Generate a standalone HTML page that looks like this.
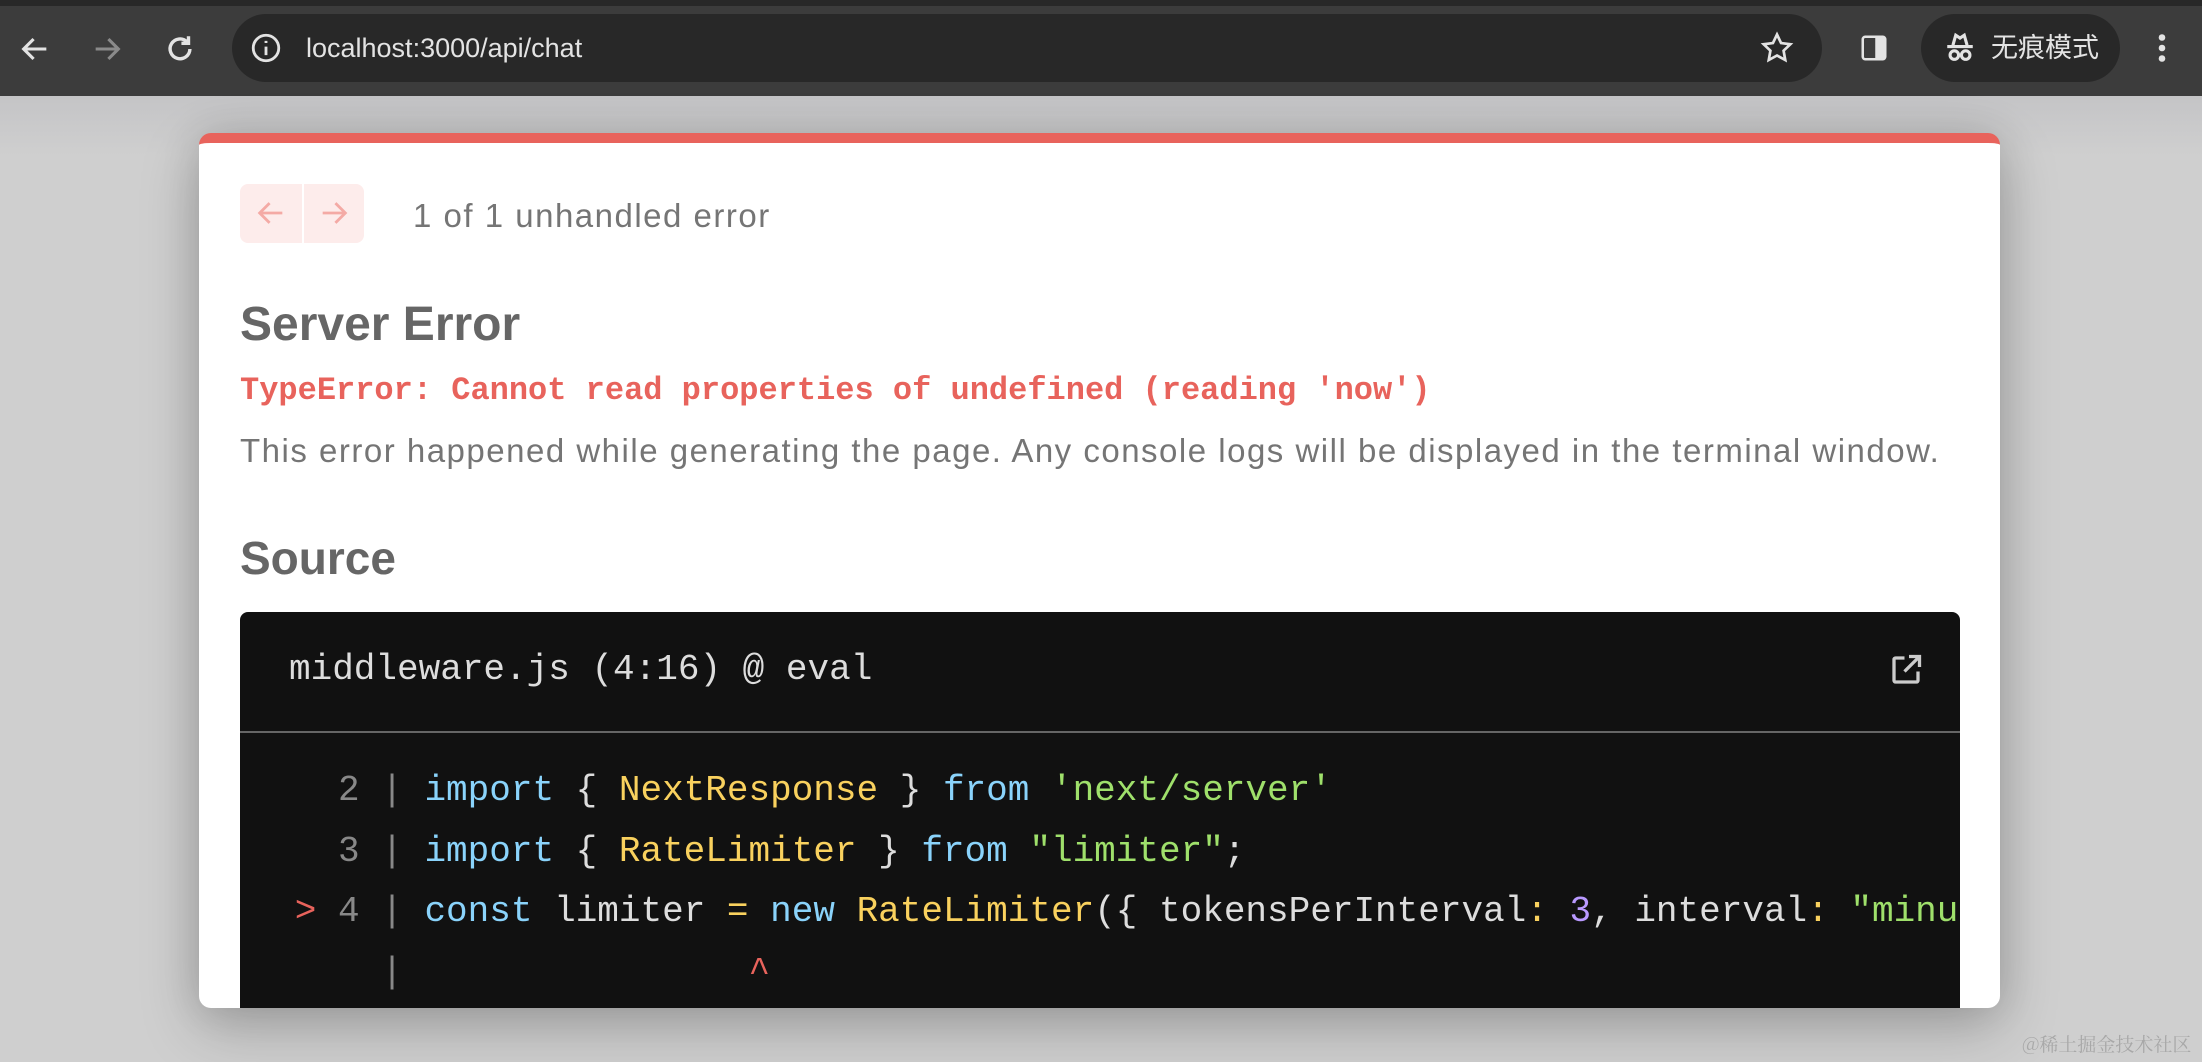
<!DOCTYPE html>
<html><head><meta charset="utf-8">
<style>
*{margin:0;padding:0;box-sizing:border-box}
html,body{width:2202px;height:1062px;overflow:hidden;background:#cfcfcf;font-family:"Liberation Sans","Noto Sans CJK SC",sans-serif}
.abs{position:absolute}
.bar{left:0;top:0;width:2202px;height:96px;background:#3c3c3c}
.bar .strip{left:0;top:0;width:2202px;height:6px;background:#282828}
.url{left:232px;top:14px;width:1590px;height:68px;border-radius:34px;background:#282828}
.urltxt{left:306px;top:30px;font-size:27px;color:#e3e3e3;line-height:36px}
.pill{left:1921px;top:14px;width:199px;height:68px;border-radius:34px;background:#282828}
.bg{left:0;top:96px;width:2202px;height:966px;background:linear-gradient(#c4c4c6,#cfcfcf 60px)}
.dlg{left:199px;top:133px;width:1801px;height:875px;background:#fff;border-radius:12px;overflow:hidden;box-shadow:0 20px 60px rgba(0,0,0,.22),0 0 40px rgba(0,0,0,.12);border-top:10px solid #e8635c}
.mono{font-family:"Liberation Mono","DejaVu Sans Mono",monospace}
.code{left:41px;top:469px;width:1720px;height:420px;background:#111;border-radius:8px 8px 0 0;overflow:hidden}
.ln{position:absolute;left:-10px;font-family:"Liberation Mono","DejaVu Sans Mono",monospace;font-size:36px;line-height:60px;white-space:pre;color:#ddd}
.k{color:#8ad3fb}.y{color:#f9d15e}.g{color:#9fe06b}.p{color:#b999ff}.n{color:#888}.r{color:#e8635c}
</style></head><body>
<div class="abs bar"><div class="abs strip"></div>
<svg class="abs" style="left:18px;top:32px" width="34" height="34" viewBox="0 0 24 24" fill="none" stroke="#e3e3e3" stroke-width="2.2"><path d="M20 12H5M11 5l-7 7 7 7"/></svg>
<svg class="abs" style="left:90px;top:32px" width="34" height="34" viewBox="0 0 24 24" fill="none" stroke="#8a8a8a" stroke-width="2.2"><path d="M4 12h15M13 5l7 7-7 7"/></svg>
<svg class="abs" style="left:163px;top:32px" width="34" height="34" viewBox="0 0 24 24" fill="none" stroke="#e3e3e3" stroke-width="2.4"><path d="M19 12a7 7 0 1 1-2-5M18 3v5h-5"/></svg>
<div class="abs url"></div>
<svg class="abs" style="left:249px;top:31px" width="34" height="34" viewBox="0 0 24 24" fill="none" stroke="#e3e3e3" stroke-width="2"><circle cx="12" cy="12" r="9"/><path d="M12 11v6M12 7v1.5"/></svg>
<div class="abs urltxt">localhost:3000/api/chat</div>
<svg class="abs" style="left:1759px;top:30px" width="36" height="36" viewBox="0 0 24 24" fill="none" stroke="#e3e3e3" stroke-width="1.8"><path d="M12 3l2.7 5.7 6.2.8-4.5 4.3 1.1 6.2L12 17l-5.5 3 1.1-6.2L3.1 9.5l6.2-.8z"/></svg>
<svg class="abs" style="left:1859px;top:33px" width="30" height="30" viewBox="0 0 24 24" fill="none" stroke="#e3e3e3" stroke-width="2"><rect x="3" y="3" width="18" height="18" rx="2"/><rect x="14" y="4" width="6" height="16" fill="#e3e3e3"/></svg>
<div class="abs pill"></div>
<svg class="abs" style="left:1943px;top:31px" width="34" height="34" viewBox="0 0 24 24" fill="none" stroke="#e3e3e3" stroke-width="2.2"><path d="M7 10l2-7 3 2 3-2 2 7M3 11h18"/><circle cx="8" cy="17" r="3"/><circle cx="16" cy="17" r="3"/></svg>
<div class="abs" style="left:1991px;top:30px;font-size:27px;color:#e3e3e3;line-height:36px">无痕模式</div>
<svg class="abs" style="left:2150px;top:30px" width="24" height="36" viewBox="0 0 8 24" fill="#e3e3e3"><circle cx="4" cy="5" r="2.2"/><circle cx="4" cy="12" r="2.2"/><circle cx="4" cy="19" r="2.2"/></svg>
</div>
<div class="abs bg"></div>
<div class="abs dlg">
 <div class="abs" style="left:41px;top:41px;width:62px;height:59px;background:#fdeceb;border-radius:8px 0 0 8px"></div>
 <div class="abs" style="left:105px;top:41px;width:60px;height:59px;background:#fdeceb;border-radius:0 8px 8px 0"></div>
 <svg class="abs" style="left:55px;top:53px" width="34" height="34" viewBox="0 0 24 24" fill="none" stroke="#f4aaa5" stroke-width="2"><path d="M20 12H5M11 5l-7 7 7 7"/></svg>
 <svg class="abs" style="left:118px;top:53px" width="34" height="34" viewBox="0 0 24 24" fill="none" stroke="#f4aaa5" stroke-width="2"><path d="M4 12h15M13 5l7 7-7 7"/></svg>
 <div class="abs" style="left:214px;top:54px;font-size:33px;letter-spacing:1.5px;color:#757575;line-height:38px;white-space:nowrap">1 of 1 unhandled error</div>
 <div class="abs" style="left:41px;top:154px;font-size:48px;font-weight:bold;color:#666;line-height:56px">Server Error</div>
 <div class="abs mono" style="left:41px;top:228px;font-size:32px;font-weight:bold;color:#e8635c;line-height:40px">TypeError: Cannot read properties of undefined (reading 'now')</div>
 <div class="abs" style="left:41px;top:289px;font-size:33px;letter-spacing:1.5px;color:#757575;line-height:38px;white-space:nowrap">This error happened while generating the page. Any console logs will be displayed in the terminal window.</div>
 <div class="abs" style="left:41px;top:388px;font-size:46px;font-weight:bold;color:#666;line-height:54px">Source</div>
 <div class="abs code">
  <div class="ln" style="left:49px;top:28px">middleware.js (4:16) @ eval</div>
  <svg class="abs" style="left:1648px;top:40px" width="36" height="36" viewBox="0 0 24 24" fill="none" stroke="#ccc" stroke-width="2.2"><path d="M11 4H5a1 1 0 0 0-1 1v14a1 1 0 0 0 1 1h14a1 1 0 0 0 1-1v-6M14 3h7v7M21 3l-10 10"/></svg>
  <div class="abs" style="left:0;top:119px;width:1720px;height:2px;background:#666"></div>
  <div class="ln" style="top:149px"><span class="n">     2 | </span><span class="k">import</span> { <span class="y">NextResponse</span> } <span class="k">from</span> <span class="g">'next/server'</span></div>
  <div class="ln" style="top:210px"><span class="n">     3 | </span><span class="k">import</span> { <span class="y">RateLimiter</span> } <span class="k">from</span> <span class="g">"limiter"</span>;</div>
  <div class="ln" style="top:270px"><span class="r">   &gt; </span><span class="n">4 | </span><span class="k">const</span> limiter <span class="y">=</span> <span class="k">new</span> <span class="y">RateLimiter</span>({ tokensPerInterval<span class="y">:</span> <span class="p">3</span>, interval<span class="y">:</span> <span class="g">"minute"</span> });</div>
  <div class="ln" style="top:331px"><span class="n">       | </span>               <span class="r">^</span></div>
 </div>
</div>
<div class="abs" style="left:2022px;top:1030px;font-size:19px;color:#a8a8a8;font-family:'Noto Serif CJK SC',serif">@稀土掘金技术社区</div>
</body></html>
